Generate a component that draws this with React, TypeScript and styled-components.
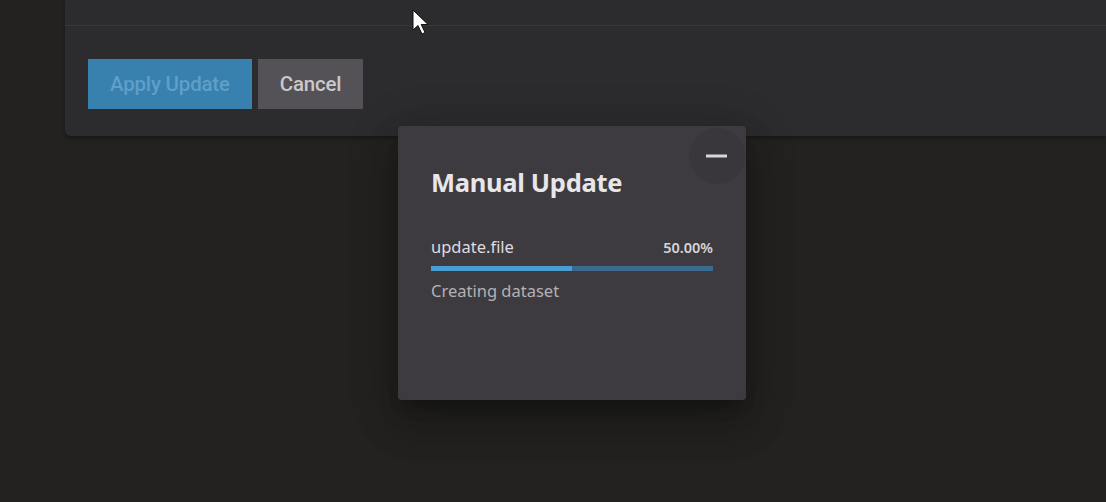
import React from 'react'
import styled, { createGlobalStyle } from 'styled-components'

const GlobalStyle = createGlobalStyle`
  html, body {
    margin: 0;
    padding: 0;
    background: #232220;
    overflow: hidden;
  }
  #root {
    width: 1106px;
    height: 502px;
    position: relative;
  }
`

const Page = styled.div`
  width: 100%;
  height: 100%;
  position: relative;
  background: #232220;
`

const Panel = styled.section`
  margin-left: 65px;
  height: 136px;
  background: #2c2b2e;
  border-radius: 0 0 0 6px;
  box-shadow: 0 2px 4px rgba(0, 0, 0, 0.35);
  display: flex;
  flex-direction: column;
`

const PanelTop = styled.div`
  height: 25px;
  border-bottom: 1px solid #38373a;
`

const Actions = styled.div`
  display: flex;
  gap: 6px;
  padding: 33px 0 0 23px;
`

const Button = styled.button<{ $primary?: boolean }>`
  height: 50px;
  padding: 0 22px;
  border: none;
  border-radius: 0;
  font-family: Roboto, 'Liberation Sans', sans-serif;
  font-size: 20.5px;
  font-weight: 500;
  letter-spacing: -0.2px;
  background: ${p => (p.$primary ? '#3880ad' : '#545256')};
  color: ${p => (p.$primary ? '#5f9fc9' : '#cac8cc')};
`

const Dialog = styled.div`
  position: absolute;
  left: 398px;
  top: 126px;
  width: 348px;
  height: 274px;
  box-sizing: border-box;
  padding: 36px 33px 0 33px;
  background: #3d3b3f;
  border-radius: 4px;
  box-shadow: 0 11px 15px -7px rgba(0, 0, 0, 0.25), 0 24px 38px 3px rgba(0, 0, 0, 0.18),
    0 9px 46px 8px rgba(0, 0, 0, 0.16);
  font-family: 'Noto Sans', 'Open Sans', sans-serif;
`

const MinimizeButton = styled.button`
  position: absolute;
  top: 2px;
  right: 1px;
  width: 56px;
  height: 56px;
  border-radius: 50%;
  border: none;
  background: #39373b;
  display: flex;
  align-items: center;
  justify-content: center;
  padding: 0;
`

const Title = styled.h2`
  margin: 0;
  font-size: 25.5px;
  font-weight: 700;
  color: #e8e6ea;
  line-height: 40px;
  letter-spacing: -0.3px;
`

const FileRow = styled.div`
  display: flex;
  justify-content: space-between;
  align-items: baseline;
  margin-top: 33px;
`

const FileName = styled.span`
  font-size: 16.5px;
  color: #dedce0;
`

const Percent = styled.span`
  font-size: 14.5px;
  font-weight: 600;
  color: #d6d4d8;
`

const Track = styled.div`
  height: 5px;
  margin-top: 8px;
  background: #3b6a8f;
  overflow: hidden;
`

const Fill = styled.div`
  height: 100%;
  background: #4a9fd2;
`

const Status = styled.div`
  margin-top: 8px;
  font-size: 16.5px;
  color: #b3b1b5;
`

const Cursor = styled.svg`
  position: absolute;
  left: 412px;
  top: 9px;
`

const App = () => {
  const progress = 50

  return (
    <Page>
      <GlobalStyle />
      <Panel>
        <PanelTop />
        <Actions>
          <Button $primary>Apply Update</Button>
          <Button>Cancel</Button>
        </Actions>
      </Panel>

      <Dialog>
        <MinimizeButton aria-label="minimize">
          <svg width="22" height="4" viewBox="0 0 22 4">
            <rect x="0" y="0.5" width="21" height="3" fill="#d8d6da" />
          </svg>
        </MinimizeButton>
        <Title>Manual Update</Title>
        <FileRow>
          <FileName>update.file</FileName>
          <Percent>{progress.toFixed(2)}%</Percent>
        </FileRow>
        <Track>
          <Fill style={{ width: `${progress}%` }} />
        </Track>
        <Status>Creating dataset</Status>
      </Dialog>

      <Cursor width="18" height="27" viewBox="0 0 18 27">
        <path d="M1 1 L1 21 L6 16.5 L10 25 L13 23.5 L9.2 15.5 L16 15.5 Z" fill="#ffffff" stroke="#111" strokeWidth="1" />
      </Cursor>
    </Page>
  )
}

export default App
